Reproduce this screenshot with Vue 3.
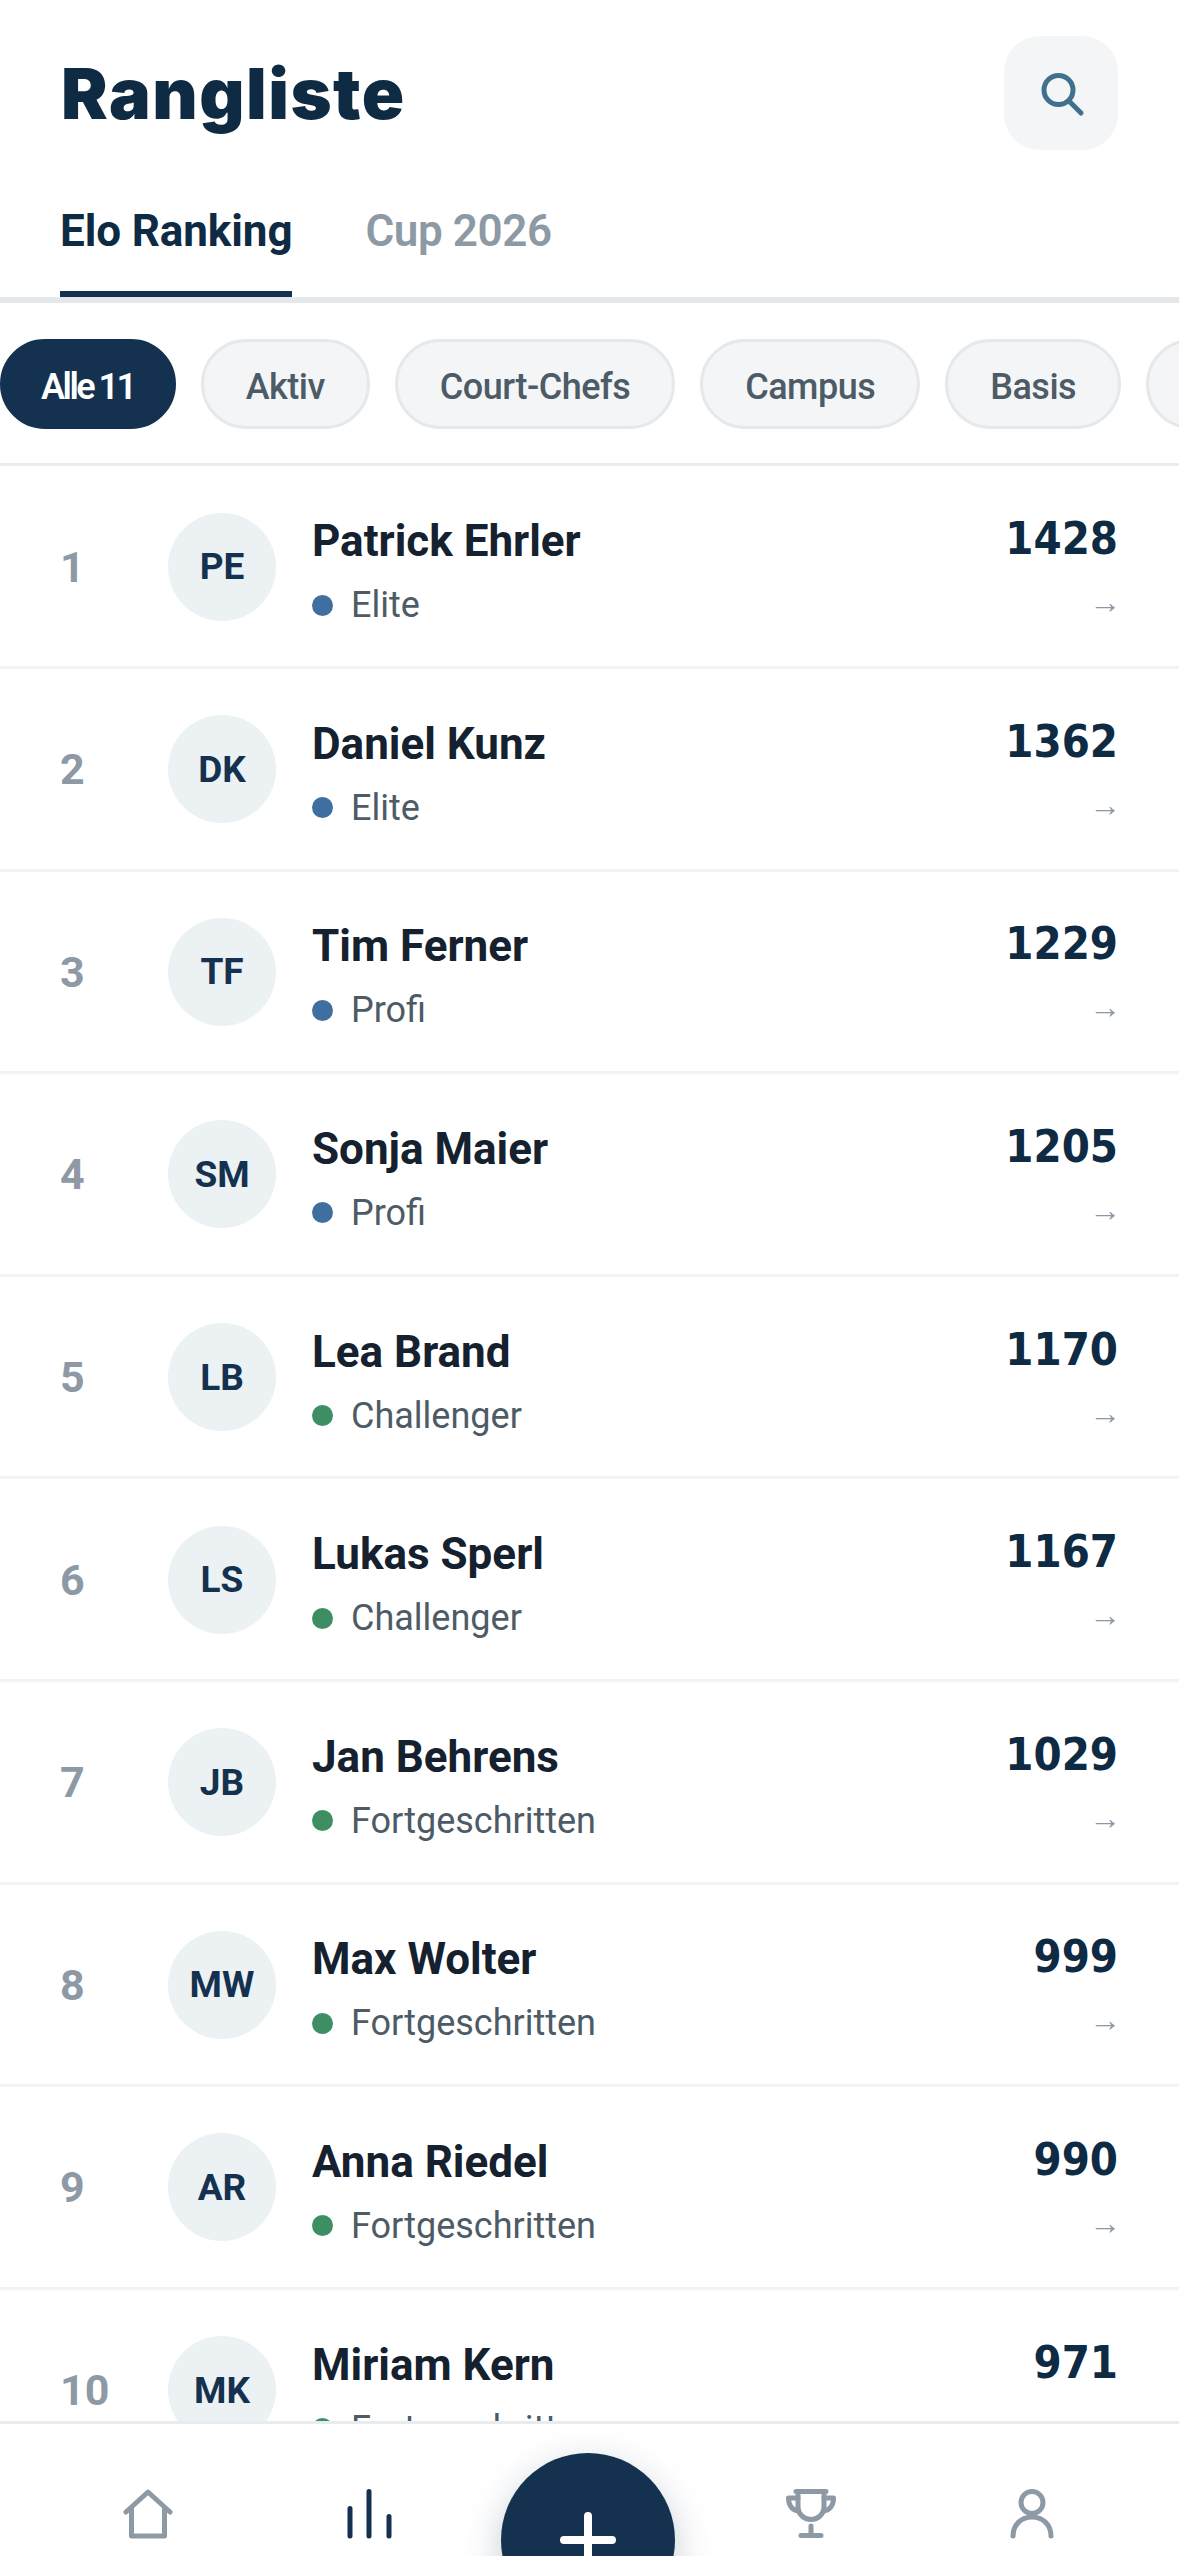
<template>
  <div class="screen">
    <header class="head">
      <h1 class="title">Rangliste</h1>
      <button class="search-btn" aria-label="Suche">
        <svg viewBox="0 0 50 50" class="search-icon" fill="none" stroke="currentColor" stroke-width="5" stroke-linecap="round">
          <circle cx="22.5" cy="22" r="14.5" />
          <path d="M33 33L45 45" />
        </svg>
      </button>
    </header>

    <nav class="tabs">
      <span class="tab active">Elo Ranking</span>
      <span class="tab">Cup 2026</span>
    </nav>

    <div class="chips">
      <span v-for="(chip, i) in chips" :key="chip" class="chip" :class="{ on: i === 0 }">{{ chip }}</span>
      <span class="chip more"></span>
    </div>

    <main class="list">
      <div v-for="(p, i) in players" :key="p.name" class="row">
        <span class="rank">{{ i + 1 }}</span>
        <span class="avatar">{{ p.initials }}</span>
        <div class="info">
          <div class="name">{{ p.name }}</div>
          <div class="level">
            <i class="dot" :class="p.tier"></i>
            {{ p.level }}
          </div>
        </div>
        <div class="score">
          <div class="elo">{{ p.elo }}</div>
          <div class="trend">→</div>
        </div>
      </div>
    </main>

    <footer class="bottom">
      <svg class="nav-icon" viewBox="0 0 50 50" fill="none" stroke="currentColor" stroke-width="5" stroke-linejoin="round" stroke-linecap="round">
        <path d="M3 23L25 3L47 23" />
        <path d="M8.5 20V47H41.5V20" />
      </svg>
      <svg class="nav-icon dark" viewBox="0 0 50 50" fill="none" stroke="currentColor" stroke-width="5" stroke-linecap="round">
        <path d="M6 19.5V47M25 2.5V47M45 27.5V47" />
      </svg>
      <button class="fab" aria-label="Neu">
        <svg viewBox="0 0 56 56" class="plus" fill="none" stroke="#fff" stroke-width="8" stroke-linecap="round">
          <path d="M28 4V56M4 28H52" />
        </svg>
      </button>
      <svg class="nav-icon" viewBox="0 0 50 50" fill="none" stroke="currentColor" stroke-width="5" stroke-linecap="round" stroke-linejoin="round">
        <path d="M10 2.5H40M12 2.5V18C12 25 18 30.5 25 30.5C32 30.5 38 25 38 18V2.5" />
        <path d="M12 9H2.5C2.5 16 6 21 12 22M38 9H47.5C47.5 16 44 21 38 22" />
        <path d="M25 37V46.5M15 46.5H35" />
      </svg>
      <svg class="nav-icon" viewBox="0 0 50 50" fill="none" stroke="currentColor" stroke-width="5" stroke-linecap="round">
        <circle cx="25" cy="13.5" r="11" />
        <path d="M6 47C6 36 14 28 25 28C36 28 44 36 44 47" />
      </svg>
    </footer>
  </div>
</template>

<script setup>
const chips = ['Alle 11', 'Aktiv', 'Court-Chefs', 'Campus', 'Basis']

const players = [
  { name: 'Patrick Ehrler', initials: 'PE', level: 'Elite', tier: 'blue', elo: 1428 },
  { name: 'Daniel Kunz', initials: 'DK', level: 'Elite', tier: 'blue', elo: 1362 },
  { name: 'Tim Ferner', initials: 'TF', level: 'Profi', tier: 'blue', elo: 1229 },
  { name: 'Sonja Maier', initials: 'SM', level: 'Profi', tier: 'blue', elo: 1205 },
  { name: 'Lea Brand', initials: 'LB', level: 'Challenger', tier: 'green', elo: 1170 },
  { name: 'Lukas Sperl', initials: 'LS', level: 'Challenger', tier: 'green', elo: 1167 },
  { name: 'Jan Behrens', initials: 'JB', level: 'Fortgeschritten', tier: 'green', elo: 1029 },
  { name: 'Max Wolter', initials: 'MW', level: 'Fortgeschritten', tier: 'green', elo: 999 },
  { name: 'Anna Riedel', initials: 'AR', level: 'Fortgeschritten', tier: 'green', elo: 990 },
  { name: 'Miriam Kern', initials: 'MK', level: 'Fortgeschritten', tier: 'green', elo: 971 }
]
</script>

<style>
html, body { margin: 0; background: #fff; }
</style>

<style scoped>
.screen {
  width: 1179px;
  height: 2556px;
  display: flex;
  flex-direction: column;
  overflow: hidden;
  background: #fff;
  font-family: "Roboto", "Liberation Sans", sans-serif;
}

.head {
  display: flex;
  justify-content: space-between;
  align-items: center;
  height: 114px;
  padding: 36px 61px 0 60px;
}
.title {
  margin: 0 0 0 1px;
  font-family: "Inter", sans-serif;
  font-size: 70px;
  font-weight: 900;
  letter-spacing: 1.5px;
  color: #0f2a43;
}
.search-btn {
  width: 114px;
  height: 114px;
  padding: 0;
  border: none;
  border-radius: 36px;
  background: #f3f5f7;
  color: #41708f;
  display: flex;
  align-items: center;
  justify-content: center;
}
.search-icon { width: 50px; height: 50px; }

.tabs {
  display: flex;
  gap: 73px;
  height: 147px;
  padding: 0 60px;
  align-items: flex-end;
  border-bottom: 6px solid #e4e8ea;
}
.tab {
  font-size: 44px;
  font-weight: 600;
  line-height: 52px;
  padding-bottom: 40px;
  letter-spacing: -0.4px;
  color: #8d9aa5;
}
.tab.active {
  color: #0f2a43;
  font-weight: 700;
  letter-spacing: -0.1px;
  position: relative;
}
.tab.active::after {
  content: "";
  position: absolute;
  left: 0;
  right: 0;
  bottom: 0;
  height: 6px;
  background: #14324f;
}

.chips {
  display: flex;
  gap: 25px;
  height: 163.4px;
  padding-top: 36px;
  box-sizing: border-box;
  border-bottom: 3px solid #e9ecee;
  overflow: hidden;
}
.chip {
  flex: none;
  height: 90px;
  box-sizing: border-box;
  padding: 5px 42px 0;
  display: flex;
  align-items: center;
  border: 3px solid #e5e9ec;
  border-radius: 45px;
  background: #f3f5f7;
  font-size: 36px;
  font-weight: 500;
  letter-spacing: -0.5px;
  color: #4d5b66;
}
.chip.on {
  padding: 5px 38px 0;
  background: #14324f;
  border-color: #14324f;
  color: #fff;
  font-weight: 600;
  letter-spacing: -2.5px;
  word-spacing: -1px;
}
.chip.more { width: 120px; }

.list {
  flex: 1;
  min-height: 0;
  overflow: hidden;
}
.row {
  height: 202.6px;
  box-sizing: border-box;
  display: flex;
  align-items: center;
  padding: 1px 61px 0 60px;
  border-bottom: 3px solid #f1f3f4;
}
.rank {
  width: 108px;
  flex: none;
  font-size: 43px;
  font-weight: 700;
  color: #8d9aa5;
}
.avatar {
  width: 108px;
  height: 108px;
  flex: none;
  border-radius: 50%;
  background: #ecf1f4;
  color: #14324f;
  font-size: 37px;
  font-weight: 700;
  display: flex;
  align-items: center;
  justify-content: center;
}
.info {
  flex: 1;
  margin-left: 36px;
  padding-top: 12px;
}
.name {
  font-size: 44px;
  font-weight: 700;
  line-height: 52px;
  color: #15212e;
}
.level {
  margin-top: 13px;
  display: flex;
  align-items: center;
  gap: 18px;
  font-size: 36px;
  line-height: 50px;
  color: #4d5b66;
}
.dot {
  width: 21px;
  height: 21px;
  border-radius: 50%;
}
.dot.blue { background: #3e6fa0; }
.dot.green { background: #3d8f63; }

.score {
  text-align: right;
  padding-top: 2px;
}
.elo {
  font-family: "DejaVu Sans Condensed", "DejaVu Sans", sans-serif;
  font-size: 45px;
  font-weight: 700;
  line-height: 52px;
  color: #0f2a43;
}
.trend {
  margin: 17px -3px 0 0;
  font-size: 32px;
  line-height: 40px;
  color: #8d9aa5;
}

.bottom {
  flex: none;
  height: 135px;
  box-sizing: border-box;
  border-top: 3px solid #e9ecee;
  background: #fff;
  display: grid;
  grid-template-columns: repeat(5, 221px);
  justify-content: center;
  justify-items: center;
  align-items: start;
  padding-top: 65px;
}
.nav-icon {
  width: 50px;
  height: 50px;
  color: #8d9aa5;
}
.nav-icon.dark { color: #14324f; }
.fab {
  width: 174px;
  height: 174px;
  margin: -36px 4px 0 0;
  padding: 0;
  border: none;
  border-radius: 50%;
  background: #14324f;
  box-shadow: 0 12px 36px rgba(20, 50, 79, 0.25);
  display: flex;
  align-items: center;
  justify-content: center;
}
.plus {
  width: 56px;
  height: 56px;
}
</style>
